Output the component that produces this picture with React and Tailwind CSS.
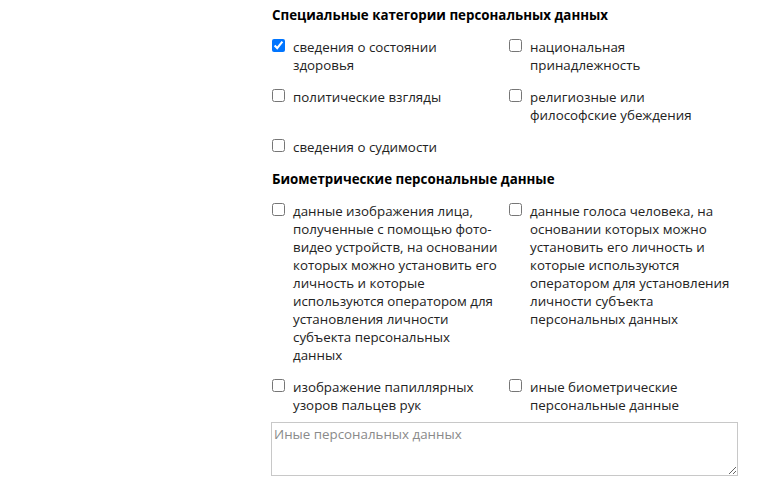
import React from "react";

const font = { fontFamily: '"Open Sans", "Noto Sans", sans-serif' };

function Item({ label, checked }) {
  return (
    <label className="flex items-start gap-[8px] text-[13.333px] leading-[18px] text-[#222]">
      <input
        type="checkbox"
        defaultChecked={checked}
        className="w-[13px] h-[13px] m-0 mt-[1px] shrink-0"
      />
      <span>{label}</span>
    </label>
  );
}

function Grid({ items }) {
  return (
    <div className="grid grid-cols-[237px_231px] gap-y-[14px]">
      {items.map((it, i) => (
        <div key={i} className="pr-[10px]">
          <Item label={it.label} checked={it.checked} />
        </div>
      ))}
    </div>
  );
}

export default function App() {
  return (
    <div className="w-[763px] h-[495px] bg-white overflow-hidden" style={font}>
      <div className="ml-[272px] w-[468px] pt-[5px] flex flex-col">
        <h3 className="text-[13.333px] leading-[20px] font-bold text-black mb-[13px]">
          Специальные категории персональных данных
        </h3>
        <Grid
          items={[
            { label: "сведения о состоянии здоровья", checked: true },
            { label: "национальная принадлежность" },
            { label: "политические взгляды" },
            { label: "религиозные или философские убеждения" },
            { label: "сведения о судимости" },
          ]}
        />
        <h3 className="text-[13.333px] leading-[20px] font-bold text-black mt-[13px] mb-[13px]">
          Биометрические персональные данные
        </h3>
        <Grid
          items={[
            {
              label:
                "данные изображения лица, полученные с помощью фото-видео устройств, на основании которых можно установить его личность и которые используются оператором для установления личности субъекта персональных данных",
            },
            {
              label:
                "данные голоса человека, на основании которых можно установить его личность и которые используются оператором для установления личности субъекта персональных данных",
            },
            { label: "изображение папиллярных узоров пальцев рук" },
            { label: "иные биометрические персональные данные" },
          ]}
        />
        <textarea
          placeholder="Иные персональных данных"
          className="mt-[8px] -ml-[1px] w-[467px] h-[54px] border border-[#c8c8c8] px-[2px] py-[2px] text-[13.333px] leading-[18px] text-[#222] placeholder:text-[#8a8a8a] outline-none"
          style={font}
        />
      </div>
    </div>
  );
}
